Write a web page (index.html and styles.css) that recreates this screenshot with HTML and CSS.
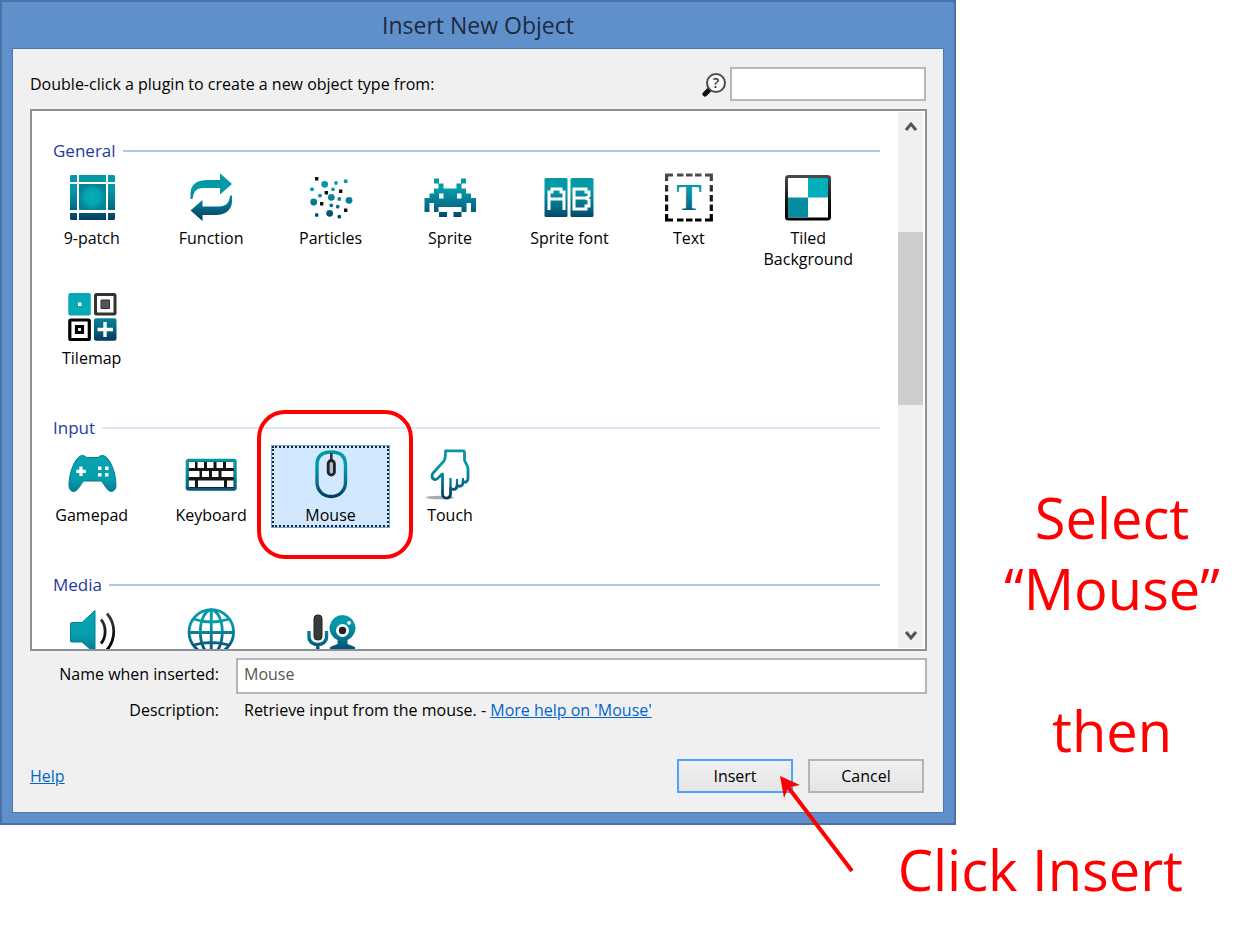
FILE: index.html
```html
<!DOCTYPE html>
<html lang="en">
<head>
<meta charset="utf-8">
<title>Insert New Object</title>
<link rel="stylesheet" href="styles.css">
</head>
<body>
<svg class="defs" aria-hidden="true">
  <defs>
    <linearGradient id="teal" gradientUnits="userSpaceOnUse" x1="0" y1="2" x2="0" y2="50">
      <stop offset="0" stop-color="#0596a2"/><stop offset=".35" stop-color="#049aa8"/><stop offset=".7" stop-color="#056d88"/><stop offset="1" stop-color="#04385c"/>
    </linearGradient>
    <linearGradient id="flat" gradientUnits="userSpaceOnUse" x1="0" y1="2" x2="0" y2="50">
      <stop offset="0" stop-color="#07a6b2"/><stop offset=".6" stop-color="#059dac"/><stop offset="1" stop-color="#046a85"/>
    </linearGradient>
    <radialGradient id="glow">
      <stop offset="0" stop-color="#04afbb"/><stop offset=".6" stop-color="#05a3b0"/><stop offset="1" stop-color="#068296"/>
    </radialGradient>
    <linearGradient id="dark" gradientUnits="userSpaceOnUse" x1="0" y1="2" x2="0" y2="50">
      <stop offset="0" stop-color="#505050"/><stop offset=".6" stop-color="#111"/><stop offset="1" stop-color="#000"/>
    </linearGradient>
  </defs>
</svg>
<div class="page">
  <main class="dialog">
    <h1 class="title">Insert New Object</h1>
    <form class="body">
      <div class="top">
        <label for="search">Double-click a plugin to create a new object type from:</label>
        <svg class="lens" viewBox="0 0 26 26" aria-hidden="true">
          <path d="M9 18L4 23" stroke="#111" stroke-width="5" stroke-linecap="round"/>
          <circle cx="15" cy="12" r="9" fill="#fafafa" stroke="#4a4a4a" stroke-width="2"/>
          <text x="15" y="17" text-anchor="middle" class="lens-mark">?</text>
        </svg>
        <input id="search" class="field search" type="text">
      </div>
      <div class="list">
        <div class="view">
          <section class="group">
            <h2 class="heading">General</h2>
            <div class="tiles">
              <button type="button" class="tile"><svg class="icon" viewBox="0 0 52 52"><path fill="url(#teal)" d="M5 4h6v7H4V5zM13 4h27v7H13zM42 4h6l1 1v6h-7zM4 13h7v26H4zM42 13h7v26h-7zM4 42h7v7H5l-1-1zM13 42h27v7H13zM42 42h7v6l-1 1h-6z"/><path fill="url(#glow)" d="M13 13h27v26H13z"/></svg>9-patch</button>
              <button type="button" class="tile"><svg class="icon" viewBox="0 0 52 52"><g fill="url(#teal)"><path d="M5.500 28V22C6 12 14 9 22 9H35V2.300L47 13 35 23.500V17H20C12 17 9 19 7.500 28z"/><path d="M47 24.500V31C46.500 40 39 44 31 44H17.500V50L5.500 39.500 17.500 29V35.500H32C41 35.500 44 33 45 24.500z"/></g></svg>Function</button>
              <button type="button" class="tile"><svg class="icon" viewBox="0 0 52 52"><g fill="url(#teal)"><circle cx="19.700" cy="13.300" r="3.400"/><circle cx="26.300" cy="26.300" r="3.400"/><circle cx="44" cy="29.300" r="3.400"/><circle cx="8.700" cy="31" r="3.400"/><circle cx="24.700" cy="42.300" r="3.400"/><circle cx="31" cy="12" r="1.900"/><circle cx="40.700" cy="10.300" r="2"/><circle cx="7" cy="18.300" r="2"/><circle cx="28" cy="18.300" r="1.900"/><circle cx="15" cy="24.700" r="1.900"/><circle cx="34.300" cy="28" r="1.900"/><circle cx="26.300" cy="34.300" r="1.900"/><circle cx="32.700" cy="35.700" r="1.900"/><circle cx="11.700" cy="44" r="1.900"/><circle cx="34.300" cy="45.700" r="1.900"/></g><path d="M10 6h3.400v3.400H10zM19.600 20H23v3.400h-3.400zM34 18.500h3.400v3.400H34zM15 31h3.400v3.400H15zM39 37.500h3.400v3.400H39z" fill="#111"/></svg>Particles</button>
              <button type="button" class="tile"><svg class="icon" viewBox="0 0 52 52"><path fill="url(#teal)" fill-rule="evenodd" d="M10 7.500h5v5h4.500v5h13v-5h4.500v-5h5v5h-4.500v5h4.500v5h5v4.500h5v14h-5v-9h-4.500v9h-5v-5h-23v5H10v-9H5.500v9H.500V27h5v-4.500H10v-5h4.500v-5H10zM15 22.500v5h4.500v-5zM33 22.500v5h4.500v-5zM15 41h8v5h-8zM29.500 41h8v5h-8z"/></svg>Sprite</button>
              <button type="button" class="tile"><svg class="icon" viewBox="0 0 52 52"><g fill="url(#teal)"><rect x="1.500" y="7" width="23" height="39" rx="1.500"/><rect x="27.500" y="7" width="23" height="39" rx="1.500"/></g><path d="M6 39V21H9V18H18V21H21V39M6 28H21M31 18H43V21H46V25L43 27 46 29V35H43V38H31ZM31 27H43" fill="none" stroke="#fff" stroke-width="3"/></svg>Sprite font</button>
              <button type="button" class="tile"><svg class="icon" viewBox="0 0 52 52"><path fill="none" stroke="url(#dark)" stroke-width="3.200" d="M3.600 10V4H10M14 4h6.500M23 4h6.500M32 4h6.500M42 4h6.300V10M48.300 14v6.500M48.300 24v6.500M48.300 33.500V40M48.300 43v6H42M38.500 49H32M29.500 49H23M20.500 49H14M10 49H3.600V43M3.600 40v-6.500M3.600 30.500V24M3.600 20.500V14"/><text x="26" y="39" text-anchor="middle" class="icon-t" fill="url(#teal)">T</text></svg>Text</button>
              <button type="button" class="tile"><svg class="icon" viewBox="0 0 52 52"><rect x="4.500" y="5.500" width="43" height="42.500" rx="2" fill="#fff" stroke="url(#dark)" stroke-width="3"/><path fill="#04afbb" d="M26 7h20v19.500H26z"/><path fill="#068d9f" d="M6 26.500h20v20H6z"/></svg>Tiled<br>Background</button>
              <button type="button" class="tile"><svg class="icon" viewBox="0 0 52 52"><rect x="2.300" y="2" width="22.500" height="22.500" rx="2" fill="#05a9b4"/><path fill="#fff" d="M12 11.500h3.500V15H12z"/><rect x="29.500" y="3.500" width="19.500" height="19.500" rx="1" fill="#fff" stroke="#333" stroke-width="3"/><path fill="#555" stroke="#333" d="M35 9h8.500v8.500H35z"/><rect x="3.800" y="29" width="19.500" height="19.500" rx="1" fill="#fff" stroke="#000" stroke-width="3.200"/><path fill="#fff" stroke="#000" stroke-width="3.200" d="M10.500 35.500h6v6h-6z"/><rect x="28" y="27.300" width="22.500" height="22.500" rx="2" fill="url(#teal)"/><path d="M39 31v15M31.500 38.500h15.500" stroke="#fff" stroke-width="3.400"/></svg>Tilemap</button>
            </div>
          </section>
          <section class="group">
            <h2 class="heading pale">Input</h2>
            <div class="tiles">
              <button type="button" class="tile"><svg class="icon" viewBox="0 0 52 52"><path fill="url(#flat)" stroke="#05788a" d="M14.500 8C17 6.800 19 8 20.500 9.500H32C33.500 8 36 6.800 38.500 8 44 10.500 50 24 50 37.500 50 42.500 46 44.500 43.500 43 39 40 37.500 34 34.500 33H18.500C15.500 34 14 40 9.500 43 6.500 44.500 3 42.500 3 37.500 3 24 9 10.500 14.500 8z"/><path d="M15 18.500v9.500M10.300 23.300h9.500" stroke="#fff" stroke-width="3.300"/><path fill="#fff" d="M32 18.500h3.500V22H32zM39 18.500h3.500V22H39zM32 25h3.500v3.500H32zM39 25h3.500v3.500H39z"/></svg>Gamepad</button>
              <button type="button" class="tile"><svg class="icon" viewBox="0 0 52 52"><rect x="2.200" y="12.200" width="48" height="29" rx="1.500" fill="#151515" stroke="url(#teal)" stroke-width="3"/><path fill="#fff" d="M3.800 14h6.200v6H3.800zM12.500 14H19v6h-6.500zM22 14h6.500v6H22zM31.500 14H38v6h-6.500zM41 14h7.500v6H41zM3.800 23h10.700v6H3.800zM17 23h7v6h-7zM27 23h6.500v6H27zM36.500 23h12v6h-12zM3.800 32.500h6.200v6.500H3.800zM13 32.500h26v6.500H13zM42 32.500h6.500v6.500H42z"/></svg>Keyboard</button>
              <button type="button" class="tile selected" aria-pressed="true"><svg class="icon" viewBox="0 0 52 52"><path d="M12 17C12 8 17 4 26.200 4S40.500 8 40.500 17V34C40.500 43 34 48.500 26.200 48.500S12 43 12 34z" fill="none" stroke="url(#teal)" stroke-width="3.400"/><path d="M26.300 5v8" stroke="#333" stroke-width="2.600"/><rect x="23.200" y="12.500" width="6.200" height="14.500" rx="3.100" fill="#aebfd0" stroke="#222" stroke-width="2.800"/></svg>Mouse</button>
              <button type="button" class="tile"><svg class="icon" viewBox="0 0 52 52"><ellipse cx="16" cy="49.500" rx="14" ry="1.800" fill="#aaa"/><path d="M21.500 2.800H39.500Q40.500 3 40.500 5V12C41 15 44 17 44 21V30C44 34 41.500 35 39 33.500V35C38.500 38 35.500 39.500 33 37V38.500C32 42 28.500 42 26.500 40V46C26 51.500 18.500 51.500 18.500 46V26C15.500 27 14.500 32 11 31.500 7.500 31 7 27 9.500 24.500L20 13Q21.500 11 21.500 2.800z" fill="#fff" stroke="url(#teal)" stroke-width="2.800" stroke-linejoin="round"/><path d="M26.500 40V30M33 38V31M39 34V30" stroke="url(#teal)" stroke-width="2.200"/></svg>Touch</button>
            </div>
            <span class="highlight"></span>
          </section>
          <section class="group">
            <h2 class="heading">Media</h2>
            <div class="tiles">
              <button type="button" class="tile" aria-label="Audio"><svg class="icon" viewBox="0 0 52 52"><path fill="url(#flat)" stroke="#05808f" d="M4.500 18.500Q4.500 17.500 5.500 17.500H16L29 5.500V48.500L16 37H5.500Q4.500 37 4.500 36z"/><path d="M35 14.500C40.500 21 40.500 32 35 38.500M41 8.500C50 19 50 34 41 45" fill="none" stroke="url(#dark)" stroke-width="2.800"/></svg></button>
              <button type="button" class="tile" aria-label="Browser"><svg class="icon" viewBox="0 0 52 52"><g fill="none" stroke="url(#teal)" stroke-width="2.800"><circle cx="26.300" cy="27" r="22.300"/><ellipse cx="26.300" cy="27" rx="11" ry="22"/><path d="M26.250 5V49M4 27.500H49M8.500 14Q26.300 20 44 14M8.500 40Q26.300 35 44 40"/></g></svg></button>
              <button type="button" class="tile" aria-label="User media"><svg class="icon" viewBox="0 0 52 52"><path d="M4 26V32C4 42 21.500 42 21.500 32V26M12.800 39V45" fill="none" stroke="url(#teal)" stroke-width="3.400"/><rect x="9" y="10" width="8" height="25" rx="3.500" fill="#3a3a3a" stroke="#222"/><path fill="url(#teal)" d="M37.500 10a13 13 0 0 1 5 25v4l7.500 3v3h-25v-3l7.500-3v-4a13 13 0 0 1 5-25z"/><circle cx="37.500" cy="25.500" r="6.500" fill="#fff"/><circle cx="37.500" cy="25.500" r="3.700" fill="#222"/><circle cx="44" cy="17.800" r="1.900" fill="#fff"/></svg></button>
            </div>
          </section>
        </div>
        <div class="bar" aria-hidden="true">
          <svg class="arrow" viewBox="0 0 14 12"><path d="M2 10L7 4L12 10" fill="none" stroke="#555" stroke-width="3"/></svg>
          <div class="track"><div class="thumb"></div></div>
          <svg class="arrow" viewBox="0 0 14 12"><path d="M2 2L7 8L12 2" fill="none" stroke="#555" stroke-width="3"/></svg>
        </div>
      </div>
      <div class="details">
        <label for="name">Name when inserted:</label>
        <input id="name" class="field name" type="text" value="Mouse">
        <span>Description:</span>
        <span class="description">Retrieve input from the mouse. - <a href="#more">More help on 'Mouse'</a></span>
      </div>
      <div class="actions">
        <a class="help" href="#help">Help</a>
        <button type="button" class="button primary">Insert</button>
        <button type="button" class="button">Cancel</button>
        <svg class="pointer" viewBox="0 0 76 100" aria-hidden="true"><path d="M9 12L73 96" stroke="#f00" stroke-width="4"/><path d="M1 1L21 10 9.500 12.500 5 23z" fill="#f00"/></svg>
      </div>
    </form>
  </main>
  <aside class="note">Select<br>“Mouse”<br><br>then</aside>
  <p class="note-click">Click Insert</p>
</div>
</body>
</html>
```
FILE: styles.css
```css
* { box-sizing: border-box; }
body { margin: 0; background: #fff; color: #000; font: 16px/21px "Open Sans", "Noto Sans", sans-serif; }
h1, h2, p { margin: 0; font-weight: 400; }
button, input { font: inherit; color: inherit; }
a { color: #0066cc; }
.defs { position: absolute; width: 0; height: 0; }

.page { display: grid; grid-template-columns: minmax(0, 1fr) 304px; }
.dialog { background: #6090cc; border: 2px solid #4a73a5; padding: 0 10px 10px; }
.title { font-size: 23px; line-height: 46px; text-align: center; color: #1d2b3d; }
.body { background: #f0f0f0; border: 1px solid #4a78b5; padding: 18px 16px 19px 17px; }

.top { display: flex; align-items: center; margin-bottom: 8px; }
.top label { flex: 1; }
.lens { width: 26px; height: 26px; margin-right: 3px; }
.lens-mark { font: 600 14px "Open Sans", sans-serif; fill: #333; }
.field { background: #fff; border: 2px solid #b4b6bb; padding: 0 6px; outline: 0; }
.search { width: 196px; height: 34px; margin-right: 1px; }

.list { display: flex; height: 542px; background: #fff; border: 2px solid #8c9199; overflow: hidden; }
.view { flex: 1; min-width: 0; overflow: hidden; padding-top: 28px; }
.group { position: relative; margin-bottom: 45px; }
.heading { display: flex; align-items: center; gap: 7px; margin: 0 17px 5px 21px; font-size: 17px; line-height: 24px; color: #1f3a9e; }
.heading::after { content: ""; flex: 1; height: 2px; background: #b3c3e6; }
.heading.pale::after { background: #dfe6f5; }
.tiles { display: grid; grid-template-columns: repeat(7, minmax(0, 1fr)); gap: 16px 0; margin-right: 29px; }
.tile { display: flex; flex-direction: column; align-items: center; padding: 2px 0 1px; border: 1px solid transparent; background: none; min-height: 83px; }
.tile.selected { background: #d1e8ff; border-color: #66a7e8; outline: 2px dotted #222; outline-offset: -3px; }
.icon { width: 52px; height: 52px; margin-bottom: 5px; flex: none; }
.icon-t { font: 700 38px "Liberation Serif", serif; }
.highlight { position: absolute; left: 225px; top: -6px; width: 156px; height: 149px; border: 4px solid #f00; border-radius: 28px; pointer-events: none; }

.bar { display: flex; flex-direction: column; align-items: center; width: 28px; background: #f0f0f0; border: 1px solid #fff; border-right-width: 2px; padding: 8px 0 6px; }
.arrow { width: 14px; height: 12px; }
.track { flex: 1; align-self: stretch; padding-top: 100px; }
.thumb { height: 173px; background: #cdcdcd; }

.details { display: grid; grid-template-columns: 189px 1fr; column-gap: 17px; row-gap: 6px; align-items: center; margin-top: 7px; text-align: right; }
.name { width: 100%; height: 36px; padding-bottom: 4px; color: #555; }
.details label { padding-bottom: 4px; }
.description { padding-left: 8px; text-align: left; }

.actions { position: relative; display: flex; align-items: center; gap: 15px; margin-top: 38px; padding-right: 3px; }
.help { margin-right: auto; }
.button { width: 116px; height: 34px; padding: 0; border: 2px solid #b4b4b4; background: linear-gradient(#f0f0f0, #e5e5e5); }
.primary { border-color: #4da3ff; }
.pointer { position: absolute; right: 72px; top: 16px; width: 76px; height: 100px; }

.note { padding: 482px 0 0 8px; color: #f00; font-size: 56px; line-height: 71px; text-align: center; }
.note-click { grid-column: 1 / -1; padding: 9px 77px 0 0; color: #f00; font-size: 56px; line-height: 71px; text-align: right; }
```
